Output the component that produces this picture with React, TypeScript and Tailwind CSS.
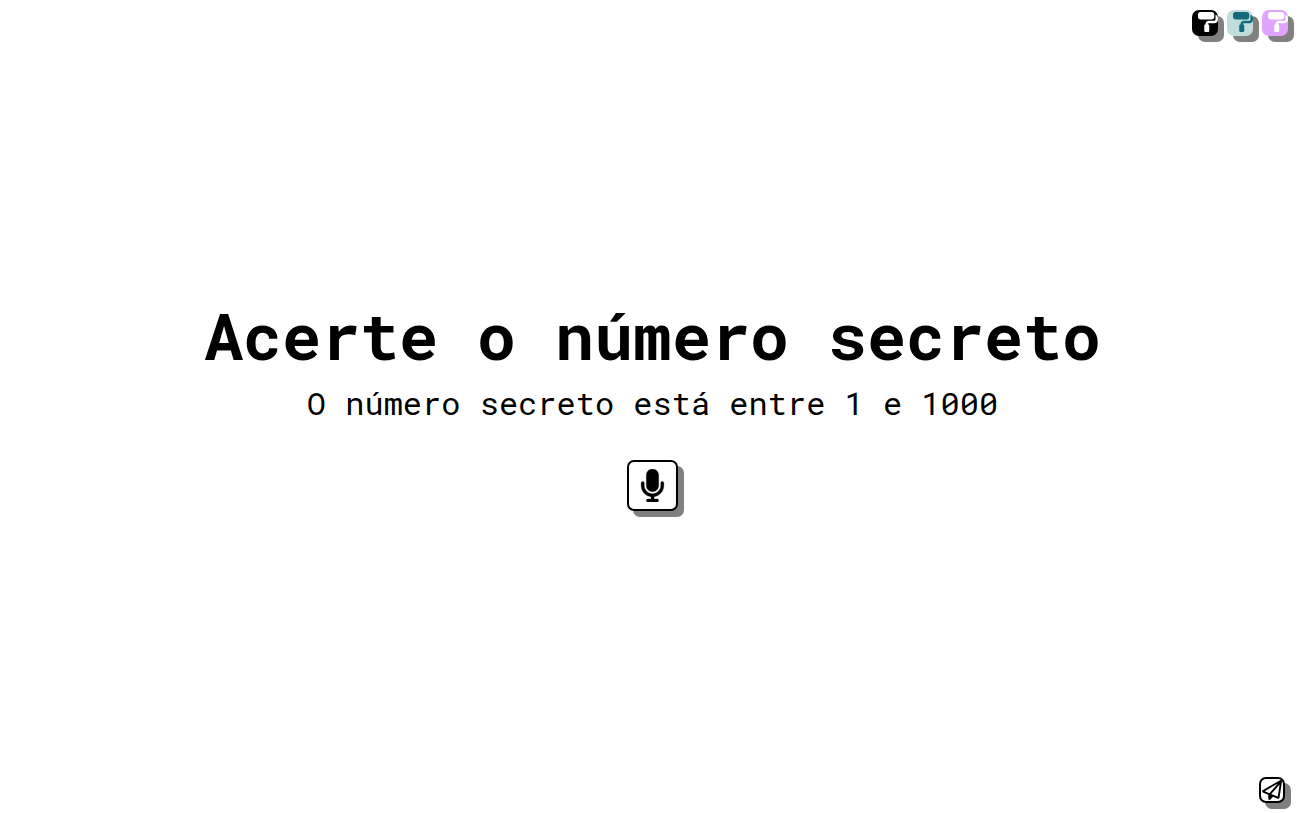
import { FaMicrophone, FaPaintRoller, FaRegPaperPlane } from 'react-icons/fa6';

const themes = [
  { name: 'Tema preto', style: 'bg-black text-white' },
  { name: 'Tema azul', style: 'bg-[#c0dcdc] text-[#14697d]' },
  { name: 'Tema rosa', style: 'bg-[#e2a2ff] text-white' },
];

export default function App() {
  return (
    <div className="flex min-h-screen flex-col justify-between bg-white font-['Roboto_Mono','DejaVu_Sans_Mono',monospace] text-black">
      <nav aria-label="Temas" className="flex justify-end gap-[9px] pt-[10px] pr-[17px]">
        {themes.map((theme) => (
          <button
            key={theme.name}
            type="button"
            aria-label={theme.name}
            className={`flex size-[26px] items-start justify-end rounded-[7px] pt-[2px] shadow-[6px_6px_0_#808080] ${theme.style}`}
          >
            <FaPaintRoller className="size-5" />
          </button>
        ))}
      </nav>

      <main className="flex flex-col items-center pb-[10px] text-center">
        <h1 className="text-[65px] leading-[86px] font-bold">Acerte o número secreto</h1>
        <p className="text-[32px] leading-[50px]">O número secreto está entre 1 e 1000</p>
        <button
          type="button"
          aria-label="Falar"
          className="mt-8 flex size-[51px] items-center justify-center rounded-[7px] border-2 border-black bg-white shadow-[6px_6px_0_#808080]"
        >
          <FaMicrophone className="size-[33px]" stroke="currentColor" strokeWidth="4" />
        </button>
      </main>

      <footer className="flex justify-end pr-5 pb-[10px]">
        <button
          type="button"
          aria-label="Enviar"
          className="flex size-[26px] items-center justify-center rounded-[7px] border-2 border-black bg-white shadow-[6px_6px_0_#808080]"
        >
          <FaRegPaperPlane className="size-5 shrink-0" />
        </button>
      </footer>
    </div>
  );
}
